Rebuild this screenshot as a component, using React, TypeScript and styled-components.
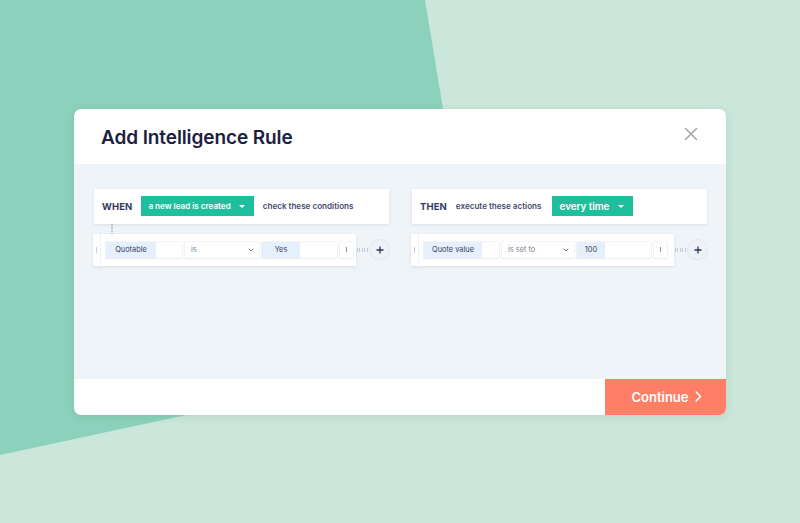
import React from "react";
import styled, { createGlobalStyle } from "styled-components";

const Global = createGlobalStyle`
  html, body { margin: 0; padding: 0; }
  body { font-family: Inter, "Open Sans", Arial, sans-serif; }
  * { box-sizing: border-box; }
`;

const Page = styled.div`
  position: relative;
  width: 800px;
  height: 523px;
  overflow: hidden;
  background: #cbe6da;
  display: flex;
  align-items: center;
  justify-content: center;
  &::before {
    content: "";
    position: absolute;
    inset: 0;
    background: #8bd1bb;
    clip-path: polygon(0 0, 425px 0, 483px 351px, 0 455px);
  }
`;

const Modal = styled.div`
  position: relative;
  width: 652px;
  height: 306px;
  background: #fff;
  border-radius: 7px;
  display: flex;
  flex-direction: column;
  overflow: hidden;
  box-shadow: 0 2px 8px rgba(40, 90, 70, 0.12);
`;

const Header = styled.div`
  height: 55px;
  flex: none;
  display: flex;
  align-items: center;
  justify-content: space-between;
  padding: 2px 28px 0 27px;
`;

const Title = styled.h1`
  margin: 0;
  font-size: 19px;
  font-weight: 600;
  letter-spacing: -0.1px;
  color: #1c2142;
`;

const Close = styled.button`
  border: 0;
  background: none;
  padding: 0;
  width: 14px;
  height: 14px;
  margin-top: -6px;
  display: flex;
  cursor: pointer;
`;

const Body = styled.div`
  flex: 1;
  background: #eff4f8;
  padding: 25px 19px 0 20px;
  display: grid;
  grid-template-columns: 295px 295px;
  column-gap: 23px;
  align-content: start;
`;

const Column = styled.div`
  display: flex;
  flex-direction: column;
`;

const RuleCard = styled.div`
  height: 35px;
  background: #fff;
  box-shadow: 0 1px 3px rgba(30, 50, 80, 0.1);
  display: flex;
  align-items: center;
  padding-left: 8px;
  gap: 9px;
`;

const Keyword = styled.span`
  font-size: 9.5px;
  font-weight: 700;
  color: #353a62;
  letter-spacing: 0.1px;
`;

const Hint = styled.span`
  font-size: 8.1px;
  font-weight: 600;
  color: #454a70;
`;

const GreenSelect = styled.div<{ $big?: boolean }>`
  height: 20px;
  background: #1dbf9c;
  color: #fff;
  display: flex;
  align-items: center;
  padding: 0 9px 0 ${(p) => (p.$big ? "8px" : "7px")};
  gap: ${(p) => (p.$big ? "9px" : "8px")};
  font-size: ${(p) => (p.$big ? "9.8px" : "8.1px")};
  font-weight: 600;
  margin-left: ${(p) => (p.$big ? "1px" : "0")};
`;

const Caret = styled.span`
  width: 0;
  height: 0;
  border-left: 3px solid transparent;
  border-right: 3px solid transparent;
  border-top: 3.5px solid #fff;
`;

const Connector = styled.div<{ $hidden?: boolean }>`
  height: 10px;
  margin-left: 17px;
  width: 2px;
  visibility: ${(p) => (p.$hidden ? "hidden" : "visible")};
  background: repeating-linear-gradient(
    to bottom,
    #b9c6da 0 1.5px,
    transparent 1.5px 3px
  );
`;

const RowLine = styled.div`
  display: flex;
  align-items: center;
  margin-left: -1px;
`;

const RowCard = styled.div<{ $w: number }>`
  width: ${(p) => p.$w}px;
  height: 32px;
  background: #fff;
  box-shadow: 0 1px 3px rgba(30, 50, 80, 0.1);
  display: flex;
  align-items: center;
`;

const Handle = styled.div`
  width: 8px;
  height: 100%;
  border-right: 1px solid #eef1f5;
  display: flex;
  align-items: center;
  justify-content: center;
  &::after {
    content: "";
    width: 1px;
    height: 6px;
    background: #c7ccd6;
  }
`;

const Fields = styled.div`
  display: flex;
  align-items: center;
  gap: 3px;
  padding-left: 5px;
`;

const Field = styled.div<{ $w: number }>`
  width: ${(p) => p.$w}px;
  height: 16px;
  background: #fff;
  box-shadow: 0 0 0 0.5px #e7ebf0, 0 1px 2px rgba(30, 50, 80, 0.08);
  display: flex;
  align-items: stretch;
  font-size: 7.4px;
  color: #3a3f63;
`;

const Chip = styled.span<{ $w: number }>`
  width: ${(p) => p.$w}px;
  background: #e6f0fc;
  display: flex;
  align-items: center;
  justify-content: center;
`;

const SelectField = styled(Field)`
  align-items: center;
  justify-content: space-between;
  padding: 0 5px 0 6px;
  color: #7d8196;
`;

const MenuBox = styled.div`
  width: 13px;
  height: 16px;
  margin-left: 3px;
  box-shadow: 0 0 0 0.5px #e7ebf0, 0 1px 2px rgba(30, 50, 80, 0.08);
  display: flex;
  align-items: center;
  justify-content: center;
  &::after {
    content: "";
    width: 1px;
    height: 5px;
    background: #8b90a5;
  }
`;

const Dots = styled.div`
  width: 12px;
  height: 4px;
  margin-left: 1px;
  background: repeating-linear-gradient(
    to right,
    #c2cad8 0 1px,
    transparent 1px 2.4px
  );
`;

const Plus = styled.button`
  width: 19px;
  height: 19px;
  border-radius: 50%;
  border: 0;
  padding: 0;
  background: #eef2f7;
  box-shadow: 0 0 0 1px #e2e8f0, 0 1px 2px rgba(30, 50, 80, 0.08);
  display: flex;
  align-items: center;
  justify-content: center;
  margin-left: 1px;
`;

const Footer = styled.div`
  height: 36px;
  flex: none;
  display: flex;
  justify-content: flex-end;
`;

const ContinueBtn = styled.button`
  width: 121px;
  height: 36px;
  border: 0;
  background: #ff7e65;
  color: #fff;
  font-family: inherit;
  font-size: 13px;
  font-weight: 600;
  display: flex;
  align-items: center;
  justify-content: center;
  gap: 6px;
  padding: 0 0 0 2px;
  cursor: pointer;
`;

const Chevron = () => (
  <svg width="7" height="11" viewBox="0 0 7 11">
    <path d="M1.2 1 L5.5 5.5 L1.2 10" fill="none" stroke="#fff" strokeWidth="1.6" strokeLinecap="round" strokeLinejoin="round" />
  </svg>
);

const SmallChevron = () => (
  <svg width="6" height="4" viewBox="0 0 6 4">
    <path d="M1 1 L3 3 L5 1" fill="none" stroke="#6f748a" strokeWidth="0.9" strokeLinecap="round" />
  </svg>
);

const PlusIcon = () => (
  <svg width="8" height="8" viewBox="0 0 8 8">
    <path d="M4 0.5 V7.5 M0.5 4 H7.5" stroke="#2f3458" strokeWidth="1.3" />
  </svg>
);

export default function App() {
  return (
    <>
      <Global />
      <Page>
        <Modal>
          <Header>
            <Title>Add Intelligence Rule</Title>
            <Close aria-label="Close">
              <svg width="14" height="14" viewBox="0 0 14 14">
                <path d="M1.5 1.5 L12.5 12.5 M12.5 1.5 L1.5 12.5" stroke="#a2a6ad" strokeWidth="1.6" strokeLinecap="round" />
              </svg>
            </Close>
          </Header>
          <Body>
            <Column>
              <RuleCard>
                <Keyword>WHEN</Keyword>
                <GreenSelect>
                  a new lead is created <Caret />
                </GreenSelect>
                <Hint>check these conditions</Hint>
              </RuleCard>
              <Connector />
              <RowLine>
                <RowCard $w={265}>
                  <Handle />
                  <Fields>
                    <Field $w={76}>
                      <Chip $w={50}>Quotable</Chip>
                    </Field>
                    <SelectField $w={74}>
                      is <SmallChevron />
                    </SelectField>
                    <Field $w={75}>
                      <Chip $w={38}>Yes</Chip>
                    </Field>
                  </Fields>
                  <MenuBox />
                </RowCard>
                <Dots />
                <Plus aria-label="Add condition">
                  <PlusIcon />
                </Plus>
              </RowLine>
            </Column>
            <Column>
              <RuleCard>
                <Keyword>THEN</Keyword>
                <Hint>execute these actions</Hint>
                <GreenSelect $big>
                  every time <Caret />
                </GreenSelect>
              </RuleCard>
              <Connector $hidden />
              <RowLine>
                <RowCard $w={265}>
                  <Handle />
                  <Fields>
                    <Field $w={75}>
                      <Chip $w={58}>Quote value</Chip>
                    </Field>
                    <SelectField $w={72}>
                      is set to <SmallChevron />
                    </SelectField>
                    <Field $w={74}>
                      <Chip $w={28}>100</Chip>
                    </Field>
                  </Fields>
                  <MenuBox />
                </RowCard>
                <Dots />
                <Plus aria-label="Add action">
                  <PlusIcon />
                </Plus>
              </RowLine>
            </Column>
          </Body>
          <Footer>
            <ContinueBtn>
              Continue <Chevron />
            </ContinueBtn>
          </Footer>
        </Modal>
      </Page>
    </>
  );
}
